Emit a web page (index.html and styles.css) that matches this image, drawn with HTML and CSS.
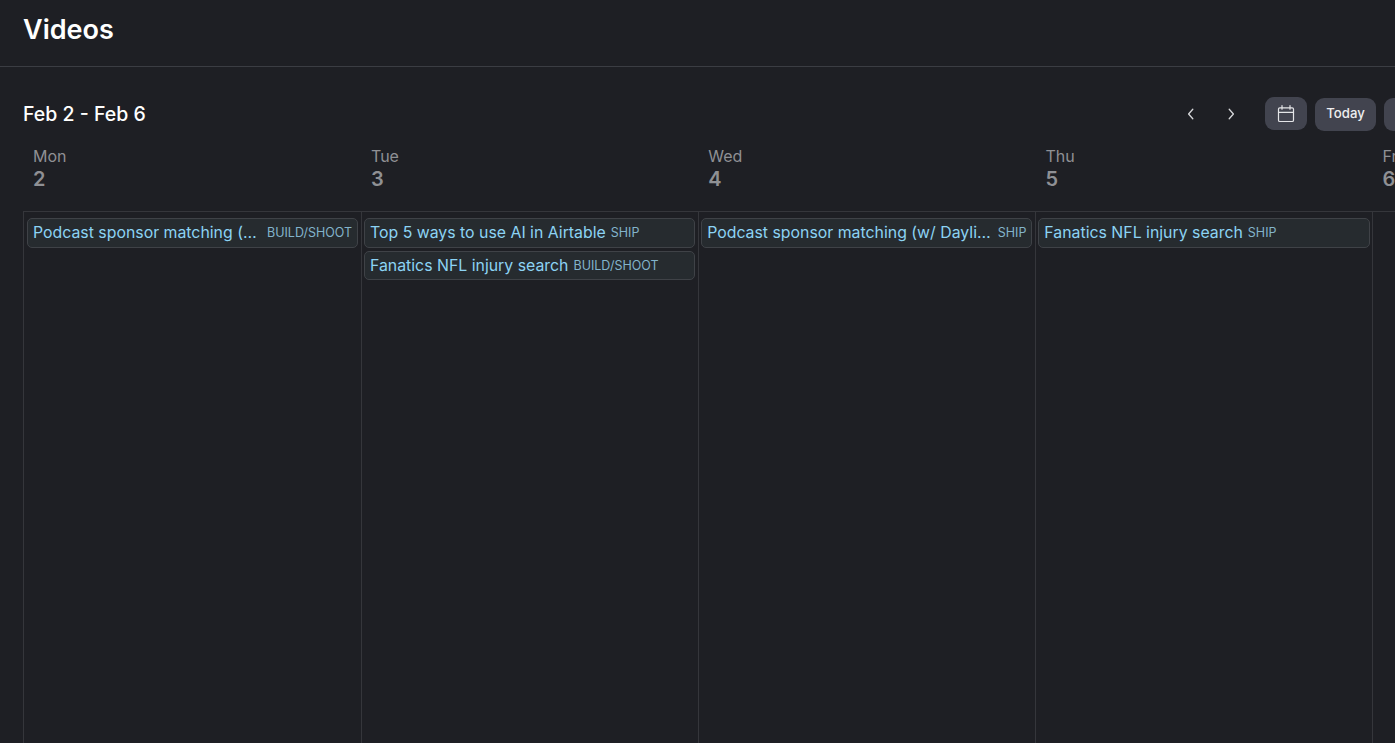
FILE: index.html
```html
<!DOCTYPE html>
<html lang="en">
<head>
<meta charset="utf-8">
<title>Videos</title>
<link rel="stylesheet" href="styles.css">
</head>
<body>
<div class="page">
  <header class="topbar"><h1 class="title">Videos</h1></header>
  <main class="content">
    <div class="toolbar">
      <h2 class="range">Feb 2 - Feb 6</h2>
      <div class="controls">
        <button class="nav" aria-label="Previous"><svg width="16" height="16" viewBox="0 0 16 16" fill="none" stroke="currentColor" stroke-width="1.3" stroke-linecap="round" stroke-linejoin="round"><path d="M9.8 3.2 5.6 8l4.2 4.8"/></svg></button>
        <button class="nav" aria-label="Next"><svg width="16" height="16" viewBox="0 0 16 16" fill="none" stroke="currentColor" stroke-width="1.3" stroke-linecap="round" stroke-linejoin="round"><path d="M6.2 3.2 10.4 8l-4.2 4.8"/></svg></button>
        <button class="btn btn-icon" aria-label="Pick date"><svg width="18" height="18" viewBox="0 0 18 18" fill="none" stroke="currentColor" stroke-width="1.2" stroke-linecap="round"><rect x="1.5" y="2.8" width="15" height="13.7" rx="1.3"/><path d="M1.5 7.4h15M5 .6v3.6M13 .6v3.6"/></svg></button>
        <button class="btn btn-text">Today</button>
        <button class="btn btn-text btn-more" aria-label="Week"></button>
      </div>
    </div>
    <div class="calendar">
      <div class="day-heads">
        <div class="day-head"><span class="dow">Mon</span><span class="dom">2</span></div>
        <div class="day-head"><span class="dow">Tue</span><span class="dom">3</span></div>
        <div class="day-head"><span class="dow">Wed</span><span class="dom">4</span></div>
        <div class="day-head"><span class="dow">Thu</span><span class="dom">5</span></div>
        <div class="day-head"><span class="dow">Fri</span><span class="dom">6</span></div>
      </div>
      <div class="day-grid">
        <div class="day">
          <div class="chip"><span class="chip-name">Podcast sponsor matching (w/ Daylight)</span><span class="chip-tag">BUILD/SHOOT</span></div>
        </div>
        <div class="day">
          <div class="chip"><span class="chip-name">Top 5 ways to use AI in Airtable</span><span class="chip-tag">SHIP</span></div>
          <div class="chip"><span class="chip-name">Fanatics NFL injury search</span><span class="chip-tag">BUILD/SHOOT</span></div>
        </div>
        <div class="day">
          <div class="chip"><span class="chip-name">Podcast sponsor matching (w/ Daylight)</span><span class="chip-tag">SHIP</span></div>
        </div>
        <div class="day">
          <div class="chip"><span class="chip-name">Fanatics NFL injury search</span><span class="chip-tag">SHIP</span></div>
        </div>
        <div class="day"></div>
      </div>
    </div>
  </main>
</div>
</body>
</html>
```
FILE: styles.css
```css
* { box-sizing: border-box; }
html, body { margin: 0; height: 100%; background: #1e1f24; overflow: hidden; }
body { font-family: Inter, "Liberation Sans", sans-serif; color: #fff; }
.page { width: 1395px; height: 743px; overflow: hidden; display: flex; flex-direction: column; }
.topbar { height: 67px; flex: none; border-bottom: 1px solid #3b3d43; padding: 0 23px 7px; display: flex; align-items: center; }
.title { margin: 0; font-size: 27px; line-height: 32px; font-weight: 600; color: #fff; }
.content { padding: 30px 0 0 23px; width: 1710px; flex: 1; display: flex; flex-direction: column; min-height: 0; }
.toolbar { display: flex; align-items: center; justify-content: space-between; height: 34px; flex: none; width: 1421px; }
.range { margin: 0; font-size: 19.5px; line-height: 34px; font-weight: 550; color: #fff; }
.controls { display: flex; align-items: center; }
.nav { width: 40px; height: 32px; padding: 0; border: 0; background: none; color: #d6d7da; display: flex; align-items: center; justify-content: center; }
.nav + .btn { margin-left: 14px; }
.btn { height: 33px; border: 0; border-radius: 9px; background: #42444f; color: #eeeef0; font: 500 13.2px Inter, "Liberation Sans", sans-serif; display: flex; align-items: center; justify-content: center; padding: 0; }
.btn + .btn { margin-left: 8px; }
.btn-icon { width: 42px; margin-top: -1px; color: #e4e5e8; }
.btn-text { width: 61px; margin-top: 1px; padding-bottom: 3px; }
.btn-more { width: 60px; }
.calendar { display: flex; flex-direction: column; flex: 1; min-height: 0; width: 1687px; }
.day-heads { display: grid; grid-template-columns: 338px repeat(4, 337.2px); height: 80px; flex: none; }
.day-head { padding: 16px 0 0 10px; display: flex; flex-direction: column; }
.dow { font-size: 16px; line-height: 19px; color: #8f9094; }
.dom { font-size: 20px; line-height: 26px; font-weight: 600; color: #8f9094; }
.day-grid { display: grid; grid-template-columns: 337.6px repeat(4, 337.2px); flex: 1; border-top: 1px solid #35363b; border-left: 1px solid #35363b; }
.day { padding: 6px 2.5px 0 2.4px; border-right: 1px solid #35363b; display: flex; flex-direction: column; gap: 3.2px; min-width: 0; }
.day:first-child { padding-left: 3px; }
.chip { height: 29.6px; flex: none; display: flex; align-items: center; gap: 5px; padding: 0 5px; border: 1px solid #3f4247; border-radius: 5px; background: #262b2f; overflow: hidden; }
.chip-name { font-size: 15.85px; line-height: 20px; font-weight: 400; color: #8cd3f4; white-space: nowrap; overflow: hidden; text-overflow: ellipsis; min-width: 0; }
.chip-tag { flex: none; font-size: 12.5px; line-height: 16px; color: #82b3cb; white-space: nowrap; }
```
